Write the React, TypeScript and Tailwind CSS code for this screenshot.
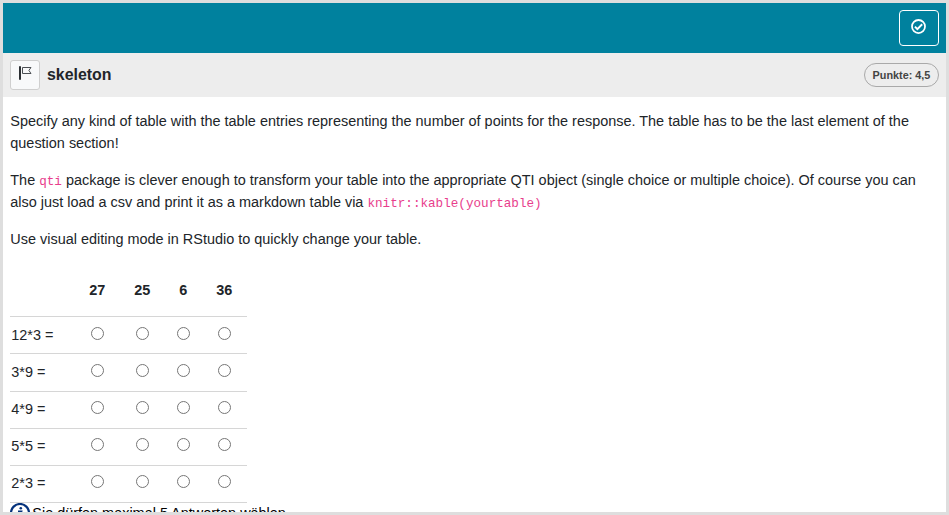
const columns = ["27", "25", "6", "36"];
const rows = ["12*3 =", "3*9 =", "4*9 =", "5*5 =", "2*3 ="];

function CheckCircleIcon() {
  return (
    <svg viewBox="0 0 512 512" className="mt-[-4px] mr-[1px] size-[15px]" fill="none" stroke="#fff">
      <circle cx="256" cy="256" r="222" strokeWidth="60" />
      <path d="M135 260 L217 346 L382 178" strokeWidth="66" />
    </svg>
  );
}

function FlagIcon() {
  return (
    <svg viewBox="0 0 14 14" className="mt-[-4px] mr-[1px] size-[14px]" fill="none">
      <path d="M2 0.2V13.7" stroke="#212529" strokeWidth="1.9" />
      <path d="M4.5 1.5H13L10.9 4.4L13 7.5H4.5V1.5" stroke="#4b4f53" strokeWidth="1" />
    </svg>
  );
}

function InfoIcon() {
  return (
    <svg viewBox="0 0 20 20" className="size-5 shrink-0">
      <circle cx="10" cy="10" r="9" fill="#fff" stroke="#05327c" strokeWidth="2.2" />
      <circle cx="10.8" cy="5.3" r="1.3" fill="#05327c" />
      <path d="M8 8.4H11.4L9.8 15" fill="none" stroke="#05327c" strokeWidth="2" />
    </svg>
  );
}

export default function App() {
  return (
    <div className="h-[515px] w-[949px] overflow-hidden border-3 border-[#dedede] bg-white font-['Liberation_Sans',Arial,sans-serif] text-[14.44px] text-[#212529]">
      <header className="flex h-[50px] items-start justify-end bg-[#00819e] pt-[7px] pr-[7px]">
        <button className="flex h-9 w-10 items-center justify-center rounded-[4px] border border-white" aria-label="Check">
          <CheckCircleIcon />
        </button>
      </header>
      <div className="flex h-11 items-center bg-[#ededed] px-[7px]">
        <button className="flex size-[30px] items-center justify-center rounded-[3px] border border-[#cfcfcf] bg-[#f8f9fa]" aria-label="Flag">
          <FlagIcon />
        </button>
        <h1 className="ml-[7px] text-[15.9px] leading-5 font-bold">skeleton</h1>
        <span className="ml-auto flex h-6 w-[75px] items-center justify-center rounded-full border border-[#a9a9a9] text-[10.83px] font-bold text-[#444]">
          Punkte: 4,5
        </span>
      </div>
      <main className="h-[415px] overflow-hidden px-[7px] pt-[13px]">
        <p className="mb-[15px] pl-[0.3px] leading-[22px] whitespace-nowrap">
          Specify any kind of table with the table entries representing the number of points for the response. The table has to be the last element of the
          <br />
          question section!
        </p>
        <p className="mb-[15px] pl-[0.3px] leading-[22px] whitespace-nowrap">
          The <code className="font-['Liberation_Mono',monospace] text-[12.64px] leading-none text-[#e83e8c]">qti</code> package is clever enough to transform your table into the appropriate QTI object (single choice or multiple choice). Of course you can
          <br />
          also just load a csv and print it as a markdown table via{" "}
          <code className="font-['Liberation_Mono',monospace] text-[12.64px] leading-none text-[#e83e8c]">knitr::kable(yourtable)</code>
        </p>
        <p className="pl-[0.3px] leading-[22px]">Use visual editing mode in RStudio to quickly change your table.</p>
        <div className="mt-[14px] w-[237px]">
          <div className="grid h-[53.3px] grid-cols-[65px_45px_45px_37px_45px] items-center border-b border-[#d6d6d6] pt-[1.7px] text-center font-bold">
            <span />
            {columns.map((column) => (
              <span key={column} className="pr-[0.6px]">{column}</span>
            ))}
          </div>
          {rows.map((row) => (
            <div key={row} className="grid h-[37.15px] grid-cols-[65px_45px_45px_37px_45px] items-center border-b border-[#d6d6d6]">
              <span className="pt-[0.4px] pl-[1.3px]">{row}</span>
              {columns.map((column) => (
                <input key={column} type="radio" name={row} aria-label={row + " " + column} className="mx-auto mt-[-4.6px] size-[13px]" />
              ))}
            </div>
          ))}
        </div>
        <div className="flex text-black">
          <InfoIcon />
          <span className="ml-[2.3px] leading-[21px]">Sie dürfen maximal 5 Antworten wählen.</span>
        </div>
      </main>
    </div>
  );
}
